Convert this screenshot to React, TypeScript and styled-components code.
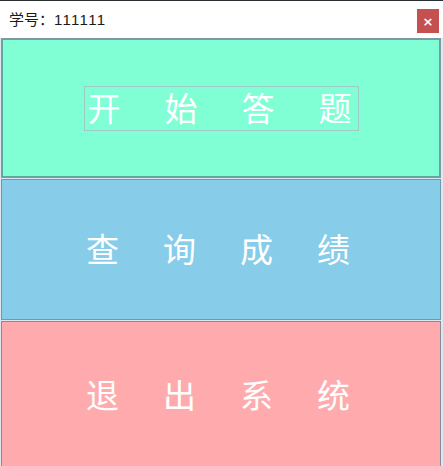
import React from "react";
import styled, { createGlobalStyle } from "styled-components";

const Global = createGlobalStyle`
  html, body { margin: 0; padding: 0; background: #ffffff; }
  body { font-family: "Liberation Sans", "Noto Sans CJK SC", sans-serif; }
`;

const Window = styled.div`
  width: 443px;
  height: 466px;
  display: flex;
  flex-direction: column;
  background: #dfe6ee;
  border-top: 1px solid #2a2f33;
  box-sizing: border-box;
  overflow: hidden;
`;

const TitleBar = styled.div`
  height: 37px;
  flex: none;
  background: #ffffff;
  display: flex;
  align-items: center;
  justify-content: space-between;
  padding: 0 4px 0 9px;
`;

const TitleText = styled.span`
  font-family: "Liberation Sans", "Noto Sans CJK SC", sans-serif;
  font-size: 15px;
  color: #1a1a1a;
  margin-top: -2px;
`;

const Digits = styled.span`
  font-family: "Liberation Sans", sans-serif;
  font-size: 15px;
  letter-spacing: 1.3px;
`;

const CloseButton = styled.button`
  width: 22px;
  height: 24px;
  margin-top: 3px;
  border: none;
  padding: 0;
  background: #c4504f;
  color: #ffffff;
  font-size: 13px;
  font-family: "DejaVu Sans", sans-serif;
  font-weight: bold;
  display: flex;
  align-items: center;
  justify-content: center;
`;

const Stack = styled.div`
  flex: 1;
  display: flex;
  flex-direction: column;
  gap: 1px;
  padding: 0 2px 0 1px;
`;

const Choice = styled.button<{ $bg: string; $h: number; $focused?: boolean; $border: string }>`
  height: ${(p) => p.$h}px;
  flex: none;
  background: ${(p) => p.$bg};
  border: 1px solid ${(p) => p.$border};
  box-shadow: ${(p) => (p.$focused ? "inset 0 0 0 1px #5fa8a0" : "none")};
  padding: 0;
  margin: 0;
  display: flex;
  align-items: center;
  justify-content: center;
  cursor: pointer;
`;

const Label = styled.span`
  font-family: "Noto Sans CJK SC", sans-serif;
  font-weight: 400;
  font-size: 33px;
  line-height: 43px;
  color: #ffffff;
  letter-spacing: 44px;
  margin-right: -38px;
  margin-top: -3px;
  display: inline-block;
`;

const FocusBox = styled.span`
  display: inline-flex;
  border: 1px solid #9ec9c4;
  height: 45px;
  width: 275px;
  box-sizing: border-box;
  align-items: center;
  justify-content: flex-start;
  padding-left: 3px;
  margin-top: 1px;
`;

export default function App() {
  return (
    <>
      <Global />
      <Window>
        <TitleBar>
          <TitleText>
            学号：<Digits>111111</Digits>
          </TitleText>
          <CloseButton>×</CloseButton>
        </TitleBar>
        <Stack>
          <Choice $bg="#80ffd5" $h={140} $focused $border="#7f9aa6">
            <FocusBox>
              <Label>开始答题</Label>
            </FocusBox>
          </Choice>
          <Choice $bg="#87cdea" $h={141} $border="#6f9aa8">
            <Label>查询成绩</Label>
          </Choice>
          <Choice $bg="#ffabad" $h={150} $border="#8a8a96">
            <Label>退出系统</Label>
          </Choice>
        </Stack>
      </Window>
    </>
  );
}
